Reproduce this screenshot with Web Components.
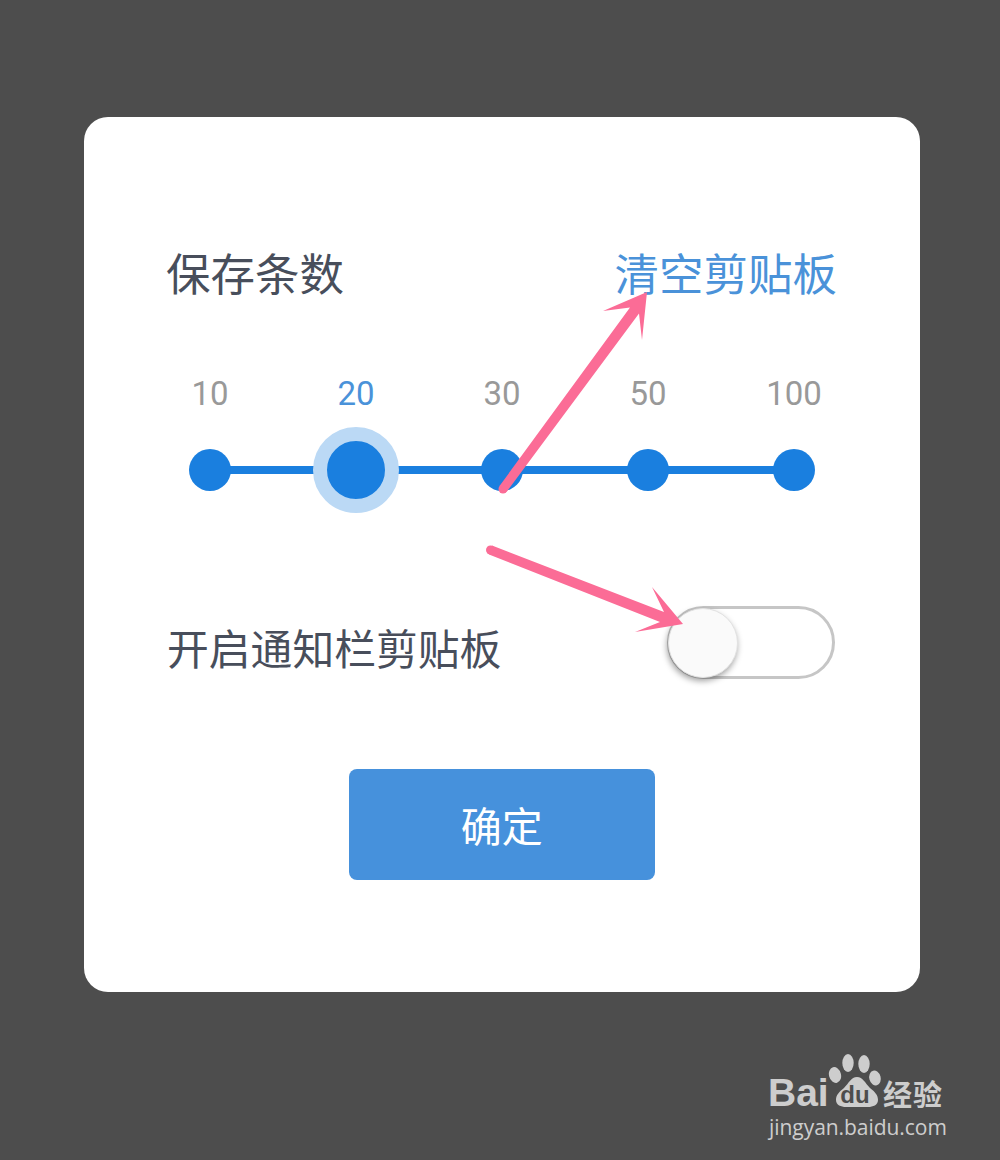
<!DOCTYPE html>
<html lang="zh">
<head>
<meta charset="utf-8">
<title>保存条数</title>
<style>
  html, body { margin: 0; padding: 0; }
  body {
    width: 1000px;
    height: 1160px;
    overflow: hidden;
    background: #4d4d4d;
    font-family: "Noto Sans CJK SC", "Liberation Sans", sans-serif;
  }
</style>
</head>
<body>
<clip-screen>
  <clip-dialog>
    <setting-head action="清空剪贴板">保存条数</setting-head>
    <level-stepper values="10,20,30,50,100" selected="20"></level-stepper>
    <toggle-row>开启通知栏剪贴板</toggle-row>
    <action-button>确定</action-button>
  </clip-dialog>
  <baidu-mark></baidu-mark>
  <pink-arrows></pink-arrows>
</clip-screen>

<script>
class ClipScreen extends HTMLElement {
  constructor() {
    super();
    this.attachShadow({ mode: "open" }).innerHTML = `
    <style>
      :host {
        display: block;
        position: relative;
        width: 1000px;
        height: 1160px;
        padding-top: 117px;
        box-sizing: border-box;
      }
    </style>
    <slot></slot>`;
  }
}

class ClipDialog extends HTMLElement {
  constructor() {
    super();
    this.attachShadow({ mode: "open" }).innerHTML = `
    <style>
      :host {
        display: block;
        box-sizing: border-box;
        width: 836px;
        height: 875px;
        margin-left: 84px;
        padding: 125px 85px 112px 84px;
        background: #fff;
        border-radius: 24px;
      }
    </style>
    <slot></slot>`;
  }
}

class SettingHead extends HTMLElement {
  constructor() {
    super();
    const action = this.getAttribute("action");
    this.attachShadow({ mode: "open" }).innerHTML = `
    <style>
      :host {
        display: flex;
        justify-content: space-between;
        align-items: center;
        height: 60px;
        margin: 0 -2px 0 -2px;
        line-height: 60px;
        font-size: 44.5px;
        color: #484e5b;
      }
      span { color: #4a92d9; }
    </style>
    <slot></slot><span>${action}</span>`;
  }
}

class LevelStepper extends HTMLElement {
  constructor() {
    super();
    const values = this.getAttribute("values").split(",");
    const selected = this.getAttribute("selected");
    const labels = values.map(v => `<b class="${v === selected ? "on" : ""}">${v}</b>`).join("");
    const dots = values.map(v => `<i class="${v === selected ? "on" : ""}"></i>`).join("");
    this.attachShadow({ mode: "open" }).innerHTML = `
    <style>
      :host {
        display: block;
        margin: 72px -32px 0 -31px;
      }
      .labels, .track {
        display: grid;
        grid-template-columns: repeat(5, 146px);
        justify-items: center;
        align-items: center;
      }
      .labels {
        height: 40px;
        font: 33px/40px Roboto, sans-serif;
        color: #999;
      }
      b { font-weight: 400; }
      b.on { color: #4a92d9; }
      .track {
        position: relative;
        height: 86px;
        margin-top: 13px;
        left: -0.5px;
      }
      .track::before {
        content: "";
        position: absolute;
        left: 73px;
        right: 73px;
        top: 39px;
        height: 8px;
        background: #1a7fdf;
      }
      i {
        position: relative;
        width: 42px;
        height: 42px;
        border-radius: 50%;
        background: #1a7fdf;
      }
      i.on {
        width: 58px;
        height: 58px;
        border: 14px solid #bbd9f5;
      }
    </style>
    <div class="labels">${labels}</div>
    <div class="track">${dots}</div>`;
  }
}

class ToggleRow extends HTMLElement {
  constructor() {
    super();
    this.attachShadow({ mode: "open" }).innerHTML = `
    <style>
      :host {
        display: flex;
        justify-content: space-between;
        align-items: flex-end;
        margin-top: 93px;
        height: 73px;
        font-size: 41.8px;
        line-height: 60px;
        color: #484e5b;
      }
      .label { margin: 0 0 2px -1px; }
      .switch {
        box-sizing: border-box;
        width: 168px;
        height: 73px;
        padding: 0;
        border: 3px solid #c6c6c6;
        border-radius: 37px;
        background: #fff;
      }
      .knob {
        box-sizing: border-box;
        width: 70px;
        height: 70px;
        margin: -1px 0 0 -2px;
        border-radius: 50%;
        background: #fafafa;
        border: 1px solid #e2e2e2;
        box-shadow: -1px 3px 6px rgba(0, 0, 0, .38);
      }
    </style>
    <span class="label"><slot></slot></span>
    <div class="switch"><div class="knob"></div></div>`;
  }
}

class ActionButton extends HTMLElement {
  constructor() {
    super();
    this.attachShadow({ mode: "open" }).innerHTML = `
    <style>
      :host {
        display: flex;
        justify-content: center;
        align-items: center;
        width: 306.5px;
        height: 111.5px;
        margin: 89.5px 0 0 180.5px;
        background: #4691dc;
        border-radius: 8px;
        color: #fff;
        font-size: 41px;
      }
    </style>
    <slot></slot>`;
  }
}

class BaiduMark extends HTMLElement {
  constructor() {
    super();
    this.attachShadow({ mode: "open" }).innerHTML = `
    <style>
      :host {
        display: grid;
        grid-template-columns: 60px 55px auto;
        width: 180px;
        margin: 61px 0 0 768px;
        color: #cdcdcd;
      }
      .bai {
        font: 700 39px/36px "Liberation Sans", sans-serif;
        align-self: end;
        height: 36px;
        margin-top: 22px;
        margin-bottom: 1px;
      }
      .paw { position: relative; width: 55px; height: 58px; }
      svg { display: block; }
      .du {
        position: absolute;
        left: 12px;
        top: 30px;
        width: 30px;
        text-align: center;
        font: 700 24px/24px "Liberation Sans", sans-serif;
        color: #4d4d4d;
      }
      .jy {
        font: 700 29px/36px "Noto Sans CJK SC", sans-serif;
        margin: 22px 0 0 0;
        letter-spacing: 1px;
        white-space: nowrap;
      }
      .url {
        grid-column: 1 / -1;
        font: 21px/24px "Open Sans", sans-serif;
        margin: 3px 0 0 1px;
        white-space: nowrap;
        letter-spacing: -.05px;
      }
    </style>
    <span class="bai">Bai</span>
    <div class="paw">
      <svg width="55" height="58" viewBox="0 0 55 58" fill="#cdcdcd">
        <ellipse cx="7" cy="22" rx="6" ry="8" transform="rotate(-15 7 22)"/>
        <ellipse cx="20" cy="10" rx="5.7" ry="9"/>
        <ellipse cx="36" cy="11" rx="5.7" ry="9"/>
        <ellipse cx="47" cy="25" rx="5.7" ry="7.5" transform="rotate(-15 47 25)"/>
        <path d="M29 24C35 24 37 30 42 35C47 39 50 42 50 47C50 52 45 54 40 54L18 54C13 54 8 52 8 47C8 42 11 39 16 35C21 30 23 24 29 24Z"/>
      </svg>
      <span class="du">du</span>
    </div>
    <span class="jy">经验</span>
    <span class="url">jingyan.baidu.com</span>`;
  }
}

class PinkArrows extends HTMLElement {
  constructor() {
    super();
    this.attachShadow({ mode: "open" }).innerHTML = `
    <style>
      :host {
        display: block;
        position: absolute;
        left: 0;
        top: 0;
        width: 1000px;
        height: 1160px;
        pointer-events: none;
      }
      svg { display: block; }
    </style>
    <svg width="1000" height="1160" viewBox="0 0 1000 1160" fill="#fb6c96">
      <circle cx="503" cy="489" r="4.500"/>
      <path d="M647 292L603 311L630 307.500L499.500 486L506.500 492L639 313.500L642 340Z"/>
      <circle cx="490.500" cy="550" r="4.500"/>
      <path d="M683 624L652 587L664 612L492 545.500L489 554.500L660 622L635 632Z"/>
    </svg>`;
  }
}

customElements.define("clip-screen", ClipScreen);
customElements.define("clip-dialog", ClipDialog);
customElements.define("setting-head", SettingHead);
customElements.define("level-stepper", LevelStepper);
customElements.define("toggle-row", ToggleRow);
customElements.define("action-button", ActionButton);
customElements.define("baidu-mark", BaiduMark);
customElements.define("pink-arrows", PinkArrows);
</script>
</body>
</html>
